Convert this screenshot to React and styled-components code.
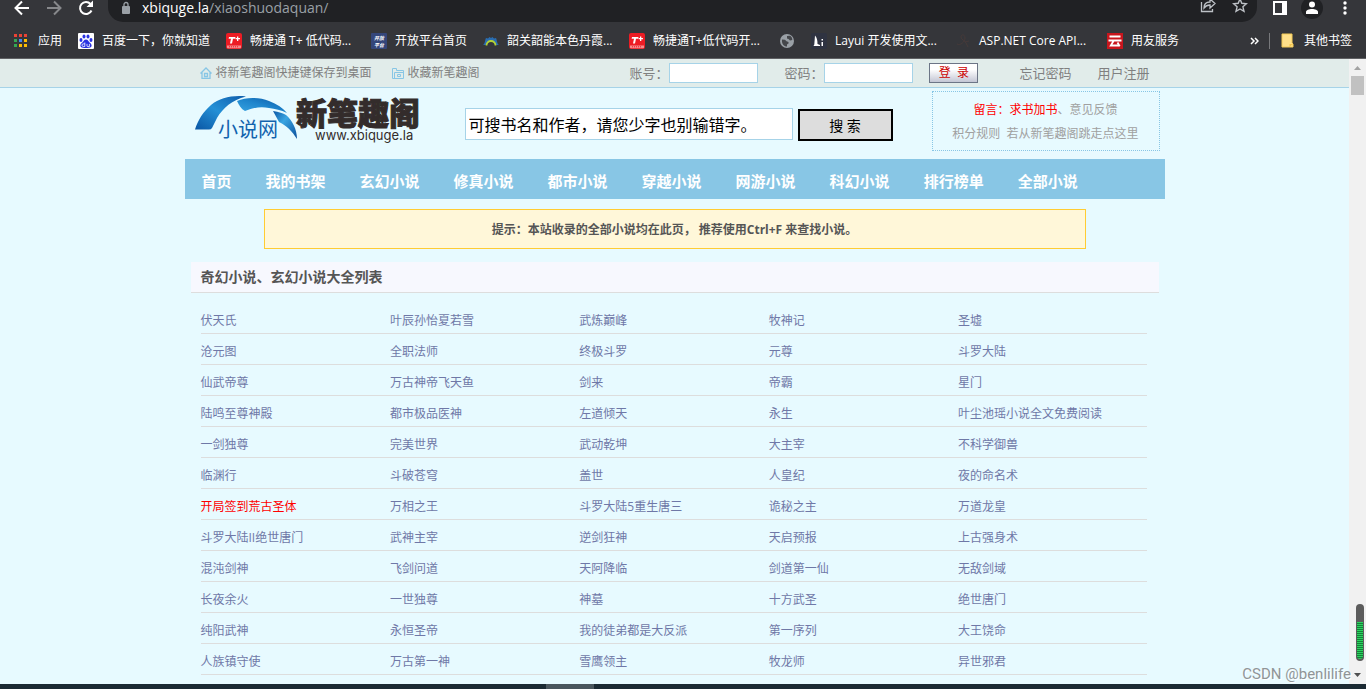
import React from 'react'
import styled, { createGlobalStyle } from 'styled-components'

const GlobalStyle = createGlobalStyle`
    * { box-sizing: border-box; }
    body {
        margin: 0;
        overflow: hidden;
        background: #e7faff;
        font-family: "Open Sans", "Noto Sans CJK SC", sans-serif;
        font-size: 12px;
    }
    a { text-decoration: none; }
    button, input { font-family: inherit; border-radius: 0; }
    svg { display: block; flex: none; }
`

const Window = styled.div`
    display: flex;
    flex-direction: column;
    height: 100vh;
    position: relative;
`

/* ---- browser ---- */
const Toolbar = styled.div`
    display: flex;
    align-items: center;
    height: 22px;
    padding: 0 8px 0 12px;
    background: #35363a;
`
const ToolButton = styled.button`
    display: flex;
    align-items: center;
    justify-content: center;
    width: ${props => props.$w || 32}px;
    height: 22px;
    padding: 0 0 6px;
    border: none;
    background: none;
    color: ${props => props.$color || '#fff'};
`
const AddressBar = styled.div`
    flex: 1;
    display: flex;
    align-items: center;
    height: 22px;
    margin: 0 11px 0 12px;
    padding: 0 1px 6px 12px;
    border-radius: 0 0 15px 15px;
    background: #202124;
`
const Address = styled.div`
    flex: 1;
    margin-left: 10px;
    font-size: 14px;
    line-height: 16px;
    color: #9aa0a6;
    span { color: #fff; }
`
const Bookmarks = styled.nav`
    display: flex;
    align-items: center;
    height: 37px;
    padding: 1px 14px 0 14px;
    background: #35363a;
    border-bottom: 1px solid #606164;
`
const Bookmark = styled.a`
    display: flex;
    align-items: center;
    gap: ${props => props.$gap || 8}px;
    width: ${props => props.$w ? props.$w + 'px' : 'auto'};
    color: #fff;
    font-size: 12px;
    line-height: 20px;
    white-space: nowrap;
`
const Spacer = styled.div`
    flex: 1;
`
const Divider = styled.div`
    width: 1px;
    height: 16px;
    margin: 0 11px 0 10px;
    background: #77787b;
`

/* ---- page ---- */
const Viewport = styled.div`
    flex: 1;
    display: flex;
    min-height: 0;
`
const Page = styled.div`
    flex: 1;
    overflow: hidden;
`
const Scrollbar = styled.div`
    width: 17px;
    display: flex;
    flex-direction: column;
    align-items: center;
    justify-content: space-between;
    padding: 7px 0 7px;
    background: #f1f1f1;
`
const ScrollTop = styled.div`
    display: flex;
    flex-direction: column;
    align-items: center;
    gap: 6px;
`
const Thumb = styled.div`
    width: 13px;
    height: 19px;
    background: #c1c1c1;
`
const Container = styled.div`
    width: 980px;
    margin: 0 auto;
`
const TopBar = styled.div`
    height: 29px;
    background: #e1ecea;
    border-bottom: 1px solid #a6d3e8;
`
const TopInner = styled(Container)`
    display: flex;
    align-items: center;
    justify-content: space-between;
    height: 28px;
    padding: 0 15px;
`
const Group = styled.div`
    display: flex;
    align-items: center;
    gap: ${props => props.$gap}px;
`
const TopLink = styled.a`
    display: flex;
    align-items: center;
    gap: 4px;
    font-size: ${props => props.$size || 12}px;
    line-height: 20px;
    color: #808080;
`
const Field = styled.label`
    display: flex;
    align-items: center;
    gap: 1px;
    font-size: 13px;
    line-height: 20px;
    color: #808080;
    input {
        width: 89px;
        height: 20px;
        padding: 0 3px;
        border: 1px solid #a6d3e8;
        background: #fff;
    }
`
const LoginButton = styled.button`
    width: 49px;
    height: 20px;
    margin: 0 15px 0 -10px;
    padding: 0;
    border: 1px solid #6c7586;
    background: linear-gradient(#fff 30%, #c3c6d4);
    color: #c00;
    font-size: 12px;
    line-height: 16px;
    white-space: pre;
`
const Header = styled(Container)`
    display: flex;
    align-items: flex-start;
    height: 71px;
    padding: 3px 5px 0 9px;
`
const Logo = styled.a`
    width: 271px;
    padding-top: 2px;
`
const SearchForm = styled.form`
    flex: 1;
    display: flex;
    gap: 5px;
    padding-top: 17px;
`
const SearchInput = styled.input`
    width: 328px;
    height: 32px;
    padding: 0 3px;
    border: 1px solid #a6d3e8;
    background: #fff;
    color: #000;
    font-size: 16px;
`
const SearchButton = styled.button`
    width: 95px;
    height: 32px;
    margin-top: 1px;
    padding: 0;
    border: 2px solid #000;
    background: #ddd;
    color: #000;
    font-size: 14px;
`
const Notice = styled.div`
    width: 228px;
    height: 60px;
    padding: 6px 0;
    border: 1px dotted #88c6e5;
    text-align: center;
    line-height: 24px;
    color: #a0a0a0;
    a { color: #a0a0a0; }
    a.hot { color: #f00; }
`
const Nav = styled(Container)`
    display: flex;
    gap: 34px;
    height: 40px;
    padding: 2px 16px 0 17px;
    background: #88c6e5;
    a {
        color: #fff;
        font-size: 15px;
        font-weight: 700;
        line-height: 40px;
    }
`
const Tip = styled.div`
    width: 822px;
    height: 40px;
    margin: 10px auto 13px;
    border: 1px solid #ffcc33;
    background: #fff7d9;
    color: #555;
    font-weight: 700;
    line-height: 40px;
    text-align: center;
`
const ListTitle = styled.h2`
    height: 31px;
    margin: 0 6px;
    padding-left: 10px;
    border-bottom: 1px solid #ddd;
    background: #f7f8fe;
    color: #555;
    font-size: 14px;
    line-height: 30px;
`
const NovelList = styled.ul`
    display: grid;
    grid-template-columns: repeat(5, 1fr);
    margin: 10px 17px 0 16px;
    padding: 0;
    list-style: none;
`
const Novel = styled.li`
    height: 31px;
    padding-top: 6px;
    border-bottom: 1px solid #ddd;
    line-height: 24px;
    a { color: ${props => props.$hot ? '#f00' : '#6f78a7'}; }
`
const Taskbar = styled.div`
    display: flex;
    justify-content: center;
    height: 5px;
    padding-right: 226px;
    background: #1b2a33;
    span {
        width: 48px;
        background: #4a565d;
    }
`
const Meter = styled.div`
    position: absolute;
    right: 2px;
    bottom: 28px;
    width: 8px;
    height: 57px;
    padding: 18px 1px 2px;
    border-radius: 4px;
    background: #5c5c5c;
    div {
        height: 100%;
        border-radius: 0 0 3px 3px;
        background: repeating-linear-gradient(#2bd45e 0 1px, #15803a 1px 2px);
    }
`
const Watermark = styled.div`
    position: absolute;
    right: 15px;
    bottom: 5px;
    font-family: Roboto, sans-serif;
    font-size: 15px;
    line-height: 20px;
    color: #909597;
    text-shadow: 1px 1px 0 #fff;
`

const appColors = ['#ea4335', '#ea4335', '#ea4335', '#34a853', '#4285f4', '#fbbc04', '#34a853', '#fbbc04', '#fbbc04']

const AppsIcon = () => (
    <svg width="14" height="14" viewBox="0 0 14 14">
        {appColors.map((c, i) => (
            <rect key={i} x={(i % 3) * 5} y={Math.floor(i / 3) * 5} width="3" height="3" fill={c} />
        ))}
    </svg>
)
const BaiduIcon = () => (
    <svg width="16" height="16" viewBox="0 0 16 16">
        <rect width="16" height="16" rx="1" fill="#fff" />
        <g fill="#2932e1">
            <ellipse cx="3" cy="7" rx="1.5" ry="2" />
            <ellipse cx="6" cy="3.5" rx="1.5" ry="2.1" />
            <ellipse cx="10" cy="3.5" rx="1.5" ry="2.1" />
            <ellipse cx="13" cy="7" rx="1.5" ry="2" />
            <path d="M8 6.600c-2 0-2.300 1.600-3.600 2.900C3 10.700 2 11.600 2.500 13.300c.5 1.700 2.500 1.700 5.500 1.600 3 .1 5 .1 5.500-1.600.5-1.700-.5-2.600-1.900-3.800C10.300 8.200 10 6.600 8 6.600z" />
        </g>
        <path d="M6.800 9.500v4H5.300a1.300 1.300 0 0 1 0-2.600h1.500M9 10.900v2q0 .7.800.7h1.600v-2.700" fill="none" stroke="#fff" strokeWidth=".8" />
    </svg>
)
const TPlusIcon = () => (
    <svg width="16" height="16" viewBox="0 0 16 16">
        <rect width="16" height="16" rx="2" fill="#ed1c24" />
        <path d="M3 4h6.500l-.4 1.800H7L6 10.500H4L5 5.800H2.600zM11 3.500h1.300V5H14v1.300h-1.700V8H11V6.300H9.600V5H11z" fill="#fff" />
        <path d="M1 12.500h14v2q0 .7-.8.7H1.800q-.8 0-.8-.7z" fill="#f58a8d" />
        <path d="M3 13.800h10" stroke="#ed1c24" strokeDasharray="1 1" />
    </svg>
)
const OpenIcon = () => (
    <svg width="16" height="16" viewBox="0 0 16 16">
        <rect width="16" height="16" rx="1" fill="#34467a" />
        <text x="8" y="7" fill="#fff" fontSize="5" fontWeight="700" fontStyle="italic" textAnchor="middle">开放</text>
        <text x="8" y="14" fill="#fff" fontSize="5" fontWeight="700" fontStyle="italic" textAnchor="middle">平台</text>
    </svg>
)
const HillIcon = () => (
    <svg width="16" height="16" viewBox="0 0 16 16">
        <path d="M0 12c2-1 2-5 3-7l2 .6L6.500 4 8 5l1.500-1L11 5.600l2-.6c1 2 1 6 3 7z" fill="#2a6db0" />
        <path d="M3.500 12.500c0-6 9-6 9 0" fill="#35363a" stroke="#b5d334" strokeWidth="1.800" />
    </svg>
)
const GlobeIcon = () => (
    <svg width="14" height="14" viewBox="0 0 14 14">
        <circle cx="7" cy="7" r="7" fill="#9aa0a6" />
        <path d="M2 5.500l3 .2 1.500 1.500 2 .8v1.500L7 10.500v2C4 12.500 1.500 10 2 5.500zM7 2l3-.2c1.500 1 2.500 2.500 2.300 4.200L10 6.500 8.500 5 7 4.500z" fill="#45474b" />
    </svg>
)
const LayuiIcon = () => (
    <svg width="16" height="16" viewBox="0 0 16 16">
        <rect width="16" height="16" rx="2" fill="#2f3341" />
        <path d="M2.500 13l.8-1.500L4 2.500c2 2 2.500 5 2.500 8.500l2.500 1v1zM10.500 6H12v1.500h-1.500zM10.500 9H12v4h-1.500z" fill="#fff" />
    </svg>
)
const AspIcon = () => (
    <svg width="16" height="16" viewBox="0 0 16 16" fill="none" stroke="#463a39">
        <path d="M2 11c3 2 8-2 8-6S6 1 6 4s4 3 5 6l2 4M10 9l4-1" />
    </svg>
)
const CloudIcon = () => (
    <svg width="16" height="16" viewBox="0 0 16 16">
        <rect width="16" height="16" fill="#c8161d" />
        <path d="M2.500 3.500h11M1.500 7.500h13M6.500 8L3.800 12.500h9M10.500 9.500l2.200 3.800" fill="none" stroke="#fff" strokeWidth="1.800" />
    </svg>
)
const FolderIcon = () => (
    <svg width="13" height="15" viewBox="0 0 13 15">
        <path d="M1 1h10v9l1 1v3H1z" fill="#ffe08a" stroke="#f3ca56" />
        <path d="M8.500 14v-3H12" fill="#f3c64e" />
    </svg>
)
const HomeIcon = () => (
    <svg width="12" height="12" viewBox="0 0 12 12" fill="none" stroke="#88c6e5">
        <path d="M.5 6.500L6 1l5.500 5.500M2 5.500v6h8v-6M4.500 6.500h3v3h-3z" strokeWidth="1.300" />
    </svg>
)
const FavIcon = () => (
    <svg width="12" height="12" viewBox="0 0 12 12" fill="none" stroke="#88c6e5">
        <path d="M.5 11.500V1.500h4v2h7v8zM2.500 11V5.500H11M5.500 7.500h3v2h-3z" />
    </svg>
)

const SiteLogo = () => (
    <svg width="232" height="52" viewBox="0 0 232 52" role="img" aria-label="新笔趣阁">
        <defs>
            <linearGradient id="swoosh" x1="0" y1="1" x2="1" y2="0">
                <stop offset="0" stopColor="#0a56a4" />
                <stop offset=".5" stopColor="#2490d6" />
                <stop offset="1" stopColor="#0d5cab" />
            </linearGradient>
            <linearGradient id="swoosh2" x1="0" y1="1" x2="1" y2="0">
                <stop offset="0" stopColor="#3aa5e2" />
                <stop offset=".5" stopColor="#1f86cd" />
                <stop offset="1" stopColor="#0a56a4" />
            </linearGradient>
            <linearGradient id="swoosh3" x1="0" y1="0" x2="1" y2="1">
                <stop offset="0" stopColor="#0a56a4" />
                <stop offset=".4" stopColor="#3aa5e2" />
                <stop offset="1" stopColor="#0a4e9b" />
            </linearGradient>
        </defs>
        <path d="M1 36.500C4 27 9 19 17 12 26 5 38 2 52 3.500 38 7 29 15 23 25l-5 10q-1 1.500-3 1.500z" fill="url(#swoosh)" />
        <path d="M43 8C52 4 65 4 75 8c8 3 14 7 18 12-6-3-12-4-18-5-9-2-16 0-24 3-4-2-6-6-8-10z" fill="url(#swoosh2)" />
        <path d="M79 18c6 1 10 2 13 4 6 5 11 14 11 24-5-8-10-13-18-17-2-4-4-7-6-11z" fill="url(#swoosh3)" />
        <text x="24" y="44" fontSize="20" fill="#1263ae">小说网</text>
        <text x="102" y="32" fontSize="31" fontWeight="900" fill="#332c2b" stroke="#332c2b" strokeWidth="1">新笔趣阁</text>
        <text x="121" y="47" fontFamily="Inter, sans-serif" fontSize="13" fill="#332c2b">www.xbiquge.la</text>
    </svg>
)

const bookmarks = [
    { title: '应用', icon: <AppsIcon />, w: 64, gap: 10 },
    { title: '百度一下，你就知道', icon: <BaiduIcon />, w: 148 },
    { title: '畅捷通 T+ 低代码...', icon: <TPlusIcon />, w: 145 },
    { title: '开放平台首页', icon: <OpenIcon />, w: 112 },
    { title: '韶关韶能本色丹霞...', icon: <HillIcon />, w: 146 },
    { title: '畅捷通T+低代码开...', icon: <TPlusIcon />, w: 151 },
    { title: '', icon: <GlobeIcon />, w: 31 },
    { title: 'Layui 开发使用文...', icon: <LayuiIcon />, w: 144 },
    { title: 'ASP.NET Core API...', icon: <AspIcon />, w: 152 },
    { title: '用友服务', icon: <CloudIcon />, w: 80 },
]

const navItems = ['首页', '我的书架', '玄幻小说', '修真小说', '都市小说', '穿越小说', '网游小说', '科幻小说', '排行榜单', '全部小说']

const novels = [
    '伏天氏', '叶辰孙怡夏若雪', '武炼巅峰', '牧神记', '圣墟',
    '沧元图', '全职法师', '终极斗罗', '元尊', '斗罗大陆',
    '仙武帝尊', '万古神帝飞天鱼', '剑来', '帝霸', '星门',
    '陆鸣至尊神殿', '都市极品医神', '左道倾天', '永生', '叶尘池瑶小说全文免费阅读',
    '一剑独尊', '完美世界', '武动乾坤', '大主宰', '不科学御兽',
    '临渊行', '斗破苍穹', '盖世', '人皇纪', '夜的命名术',
    '开局签到荒古圣体', '万相之王', '斗罗大陆5重生唐三', '诡秘之主', '万道龙皇',
    '斗罗大陆II绝世唐门', '武神主宰', '逆剑狂神', '天启预报', '上古强身术',
    '混沌剑神', '飞剑问道', '天阿降临', '剑道第一仙', '无敌剑域',
    '长夜余火', '一世独尊', '神墓', '十方武圣', '绝世唐门',
    '纯阳武神', '永恒圣帝', '我的徒弟都是大反派', '第一序列', '大王饶命',
    '人族镇守使', '万古第一神', '雪鹰领主', '牧龙师', '异世邪君',
]

function Browser() {
    return (
        <>
            <Toolbar>
                <ToolButton $w={20} aria-label="Back">
                    <svg width="16" height="16" viewBox="0 0 16 16" fill="none" stroke="currentColor" strokeWidth="2"><path d="M15 8H2M8 1.500L1.500 8 8 14.500" /></svg>
                </ToolButton>
                <ToolButton $w={44} $color="#87888b" aria-label="Forward">
                    <svg width="16" height="16" viewBox="0 0 16 16" fill="none" stroke="currentColor" strokeWidth="2"><path d="M1 8h13M8 1.500L14.500 8 8 14.500" /></svg>
                </ToolButton>
                <ToolButton $w={20} aria-label="Reload">
                    <svg width="16" height="16" viewBox="0 0 16 16" fill="none" stroke="currentColor" strokeWidth="2"><path d="M13.500 10.500A6 6 0 1 1 12.500 4" /><path d="M15 .5V7H8.500z" fill="currentColor" stroke="none" /></svg>
                </ToolButton>
                <AddressBar>
                    <svg width="12" height="14" viewBox="0 0 12 14"><path d="M3 5h6q1 0 1 1v6q0 1-1 1H3q-1 0-1-1V6q0-1 1-1z" fill="#9aa0a6" /><path d="M4 6V3.500a2 2 0 0 1 4 0V6" fill="none" stroke="#9aa0a6" strokeWidth="1.300" /></svg>
                    <Address><span>xbiquge.la</span>/xiaoshuodaquan/</Address>
                    <ToolButton $color="#bdc1c6" aria-label="Share">
                        <svg width="16" height="16" viewBox="0 0 16 16" fill="none" stroke="currentColor" strokeWidth="1.300"><path d="M1.500 5v9.500h11V12M4 11c0-4 2.500-6 6-6V2l5 4.500-5 4.500V8C7.500 8 5.500 9 4 11z" /></svg>
                    </ToolButton>
                    <ToolButton $color="#bdc1c6" aria-label="Bookmark">
                        <svg width="16" height="16" viewBox="0 0 16 16" fill="none" stroke="currentColor" strokeWidth="1.400"><path d="M8 2l1.800 4.300 4.700.4-3.600 3.100 1.100 4.600L8 12l-4 2.400 1.100-4.600-3.600-3.100 4.700-.4z" /></svg>
                    </ToolButton>
                </AddressBar>
                <ToolButton $w={24} aria-label="Side panel">
                    <svg width="14" height="14" viewBox="0 0 14 14"><path d="M0 0h14v14H0zM2 2v10h7V2z" fill="currentColor" fillRule="evenodd" /></svg>
                </ToolButton>
                <ToolButton $w={40} aria-label="Profile">
                    <svg width="22" height="22" viewBox="0 0 22 22"><circle cx="11" cy="11" r="11" fill="#202124" /><circle cx="11" cy="7.500" r="3" fill="#fff" /><path d="M5 17v-2c0-4 12-4 12 0v2z" fill="#fff" /></svg>
                </ToolButton>
                <ToolButton $w={26} aria-label="Menu">
                    <svg width="4" height="16" viewBox="0 0 4 16" fill="currentColor"><circle cx="2" cy="3" r="1.700" /><circle cx="2" cy="8" r="1.700" /><circle cx="2" cy="13" r="1.700" /></svg>
                </ToolButton>
            </Toolbar>
            <Bookmarks>
                {bookmarks.map((b, i) => (
                    <Bookmark href="#" key={i} $w={b.w} $gap={b.gap} aria-label={b.title || 'Site'}>
                        {b.icon}{b.title}
                    </Bookmark>
                ))}
                <Spacer />
                <svg width="9" height="8" viewBox="0 0 9 8" fill="none" stroke="#fff" strokeWidth="1.500"><path d="M1 1l3 3-3 3M5 1l3 3-3 3" /></svg>
                <Divider />
                <Bookmark href="#" $gap={10}><FolderIcon />其他书签</Bookmark>
            </Bookmarks>
        </>
    )
}

function Site() {
    return (
        <Page>
            <TopBar>
                <TopInner>
                    <Group $gap={20}>
                        <TopLink href="#"><HomeIcon />将新笔趣阁快捷键保存到桌面</TopLink>
                        <TopLink href="#"><FavIcon />收藏新笔趣阁</TopLink>
                    </Group>
                    <Group $gap={26}>
                        <Field>账号：<input type="text" /></Field>
                        <Field>密码：<input type="password" /></Field>
                        <LoginButton>{'登  录'}</LoginButton>
                        <TopLink href="#" $size={13}>忘记密码</TopLink>
                        <TopLink href="#" $size={13}>用户注册</TopLink>
                    </Group>
                </TopInner>
            </TopBar>
            <Header>
                <Logo href="#"><SiteLogo /></Logo>
                <SearchForm>
                    <SearchInput aria-label="搜索" defaultValue="可搜书名和作者，请您少字也别输错字。" />
                    <SearchButton type="button">搜 索</SearchButton>
                </SearchForm>
                <Notice>
                    <div><a className="hot" href="#">留言：求书加书</a>、<a href="#">意见反馈</a></div>
                    <div><a href="#">积分规则</a>&nbsp; <a href="#">若从新笔趣阁跳走点这里</a></div>
                </Notice>
            </Header>
            <Nav as="nav">
                {navItems.map(item => <a href="#" key={item}>{item}</a>)}
            </Nav>
            <Container>
                <Tip>提示：本站收录的全部小说均在此页， 推荐使用Ctrl+F 来查找小说。</Tip>
                <ListTitle>奇幻小说、玄幻小说大全列表</ListTitle>
                <NovelList>
                    {novels.map(name => (
                        <Novel key={name} $hot={name === '开局签到荒古圣体'}><a href="#">{name}</a></Novel>
                    ))}
                </NovelList>
            </Container>
        </Page>
    )
}

function App() {
    return (
        <Window>
            <GlobalStyle />
            <Browser />
            <Viewport>
                <Site />
                <Scrollbar>
                    <ScrollTop>
                        <svg width="7" height="4" viewBox="0 0 7 4"><path d="M0 4l3.500-4L7 4z" fill="#a3a3a3" /></svg>
                        <Thumb />
                    </ScrollTop>
                    <svg width="7" height="4" viewBox="0 0 7 4"><path d="M0 0l3.500 4L7 0z" fill="#505050" /></svg>
                </Scrollbar>
            </Viewport>
            <Taskbar><span /></Taskbar>
            <Meter><div /></Meter>
            <Watermark>CSDN @benlilife</Watermark>
        </Window>
    )
}

export default App
